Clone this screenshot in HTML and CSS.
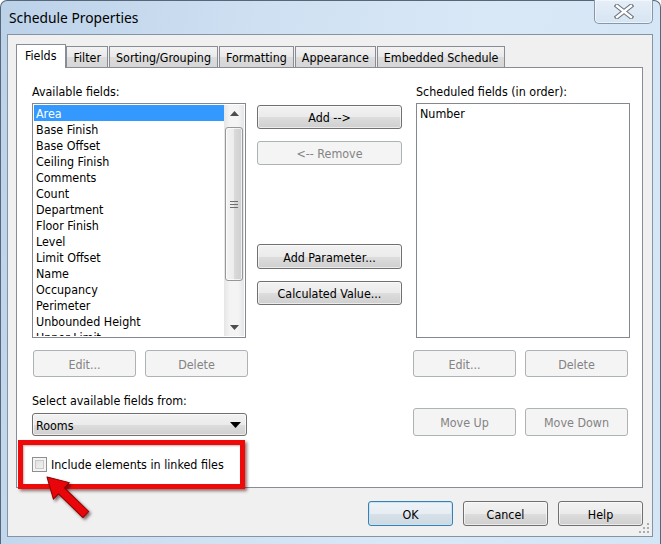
FILE: index.html
```html
<!DOCTYPE html>
<html>
<head>
<meta charset="utf-8">
<title>Schedule Properties</title>
<link rel="stylesheet" href="styles.css">
</head>
<body>
<div class="window">
  <div class="titlebar">
    <span class="title">Schedule Properties</span>
    <div class="close">
      <svg width="20" height="15" viewBox="0 0 20 15">
        <path d="M3 2 L17 13 M17 2 L3 13" stroke="#6c7480" stroke-width="4.6" stroke-linecap="square"/>
        <path d="M3 2 L17 13 M17 2 L3 13" stroke="#ffffff" stroke-width="2.4" stroke-linecap="square"/>
      </svg>
    </div>
  </div>
  <div class="client">
    <div class="tabs">
      <div class="tab active">Fields</div>
      <div class="tab">Filter</div>
      <div class="tab">Sorting/Grouping</div>
      <div class="tab">Formatting</div>
      <div class="tab">Appearance</div>
      <div class="tab">Embedded Schedule</div>
    </div>
    <div class="panel">
      <div class="cols">
        <div class="col side">
          <div class="label">Available fields:</div>
          <div class="listbox">
            <div class="items">
              <div class="item sel">Area</div>
              <div class="item">Base Finish</div>
              <div class="item">Base Offset</div>
              <div class="item">Ceiling Finish</div>
              <div class="item">Comments</div>
              <div class="item">Count</div>
              <div class="item">Department</div>
              <div class="item">Floor Finish</div>
              <div class="item">Level</div>
              <div class="item">Limit Offset</div>
              <div class="item">Name</div>
              <div class="item">Occupancy</div>
              <div class="item">Perimeter</div>
              <div class="item">Unbounded Height</div>
              <div class="item">Upper Limit</div>
            </div>
            <div class="scrollbar">
              <div class="sb-arrow">
                <svg width="9" height="5" viewBox="0 0 9 5"><path d="M0 5 L4.5 0 L9 5 Z" fill="#4d4d4d"/></svg>
              </div>
              <div class="sb-track">
                <div class="sb-thumb">
                  <svg width="8" height="7" viewBox="0 0 8 7"><path d="M0 0.5 H8 M0 3.5 H8 M0 6.5 H8" stroke="#6e6e6e" stroke-width="1"/></svg>
                </div>
              </div>
              <div class="sb-arrow">
                <svg width="9" height="5" viewBox="0 0 9 5"><path d="M0 0 L4.5 5 L9 0 Z" fill="#4d4d4d"/></svg>
              </div>
            </div>
          </div>
          <div class="btnrow">
            <button class="btn dis tall">Edit...</button>
            <button class="btn dis tall">Delete</button>
          </div>
          <div class="label from">Select available fields from:</div>
          <div class="combo">
            <span>Rooms</span>
            <svg width="11" height="6" viewBox="0 0 11 6"><path d="M0 0 L5.5 6 L11 0 Z" fill="#000"/></svg>
          </div>
          <label class="linked"><span class="checkbox"></span><span>Include elements in linked files</span></label>
        </div>
        <div class="col mid">
          <button class="btn mbtn">Add --&gt;</button>
          <button class="btn dis mbtn gap12">&lt;-- Remove</button>
          <button class="btn mbtn param">Add Parameter...</button>
          <button class="btn mbtn gap12">Calculated Value...</button>
        </div>
        <div class="col side right">
          <div class="label indent">Scheduled fields (in order):</div>
          <div class="listbox indent">
            <div class="items">
              <div class="item">Number</div>
            </div>
          </div>
          <div class="btnrow">
            <button class="btn dis tall">Edit...</button>
            <button class="btn dis tall">Delete</button>
          </div>
          <div class="btnrow move">
            <button class="btn dis tall2">Move Up</button>
            <button class="btn dis tall2">Move Down</button>
          </div>
        </div>
      </div>
      <div class="highlight"></div>
      <svg class="arrow" width="80" height="70" viewBox="0 0 80 70">
        <g transform="translate(16 12) rotate(44)">
          <polygon points="0,0 20,-11.5 20,-4.2 54,-4.2 54,4.2 20,4.2 20,11.5" fill="#e8060b" stroke="#8d0000" stroke-width="1" stroke-linejoin="round"/>
        </g>
      </svg>
    </div>
    <div class="footer">
      <button class="btn fbtn default">OK</button>
      <button class="btn fbtn">Cancel</button>
      <button class="btn fbtn">Help</button>
    </div>
    <svg class="grip" width="12" height="12" viewBox="0 0 12 12">
      <g fill="#a8aeb6">
        <rect x="9" y="1" width="2" height="2"/>
        <rect x="5" y="5" width="2" height="2"/><rect x="9" y="5" width="2" height="2"/>
        <rect x="1" y="9" width="2" height="2"/><rect x="5" y="9" width="2" height="2"/><rect x="9" y="9" width="2" height="2"/>
      </g>
    </svg>
  </div>
</div>
</body>
</html>
```

FILE: styles.css
```css
* { box-sizing: border-box; }

html, body {
  margin: 0;
  padding: 0;
  background: #ffffff;
}

body {
  width: 661px;
  height: 544px;
  overflow: hidden;
  font-family: "DejaVu Sans Condensed", "DejaVu Sans", sans-serif;
  font-stretch: condensed;
  font-size: 12.4px;
  color: #000;
}

.window {
  width: 661px;
  height: 544px;
  display: flex;
  flex-direction: column;
  border: 1px solid #56677a;
  border-bottom: none;
  border-radius: 7px 7px 0 0;
  background: linear-gradient(100deg, #bcd2e9 0%, #cfe0f2 35%, #d8e8f7 65%, #d4e5f5 100%);
  position: relative;
}

.titlebar {
  height: 33px;
  flex: none;
  display: flex;
  justify-content: space-between;
  align-items: flex-start;
  padding: 0 7px 0 8px;
}

.title {
  font-family: "Noto Sans", "Open Sans", sans-serif;
  font-stretch: normal;
  font-size: 13.8px;
  line-height: 18px;
  margin-top: 8px;
  color: #000;
}

.close {
  width: 59px;
  height: 24px;
  margin-top: -1px;
  border: 1px solid #8796aa;
  border-top: none;
  border-radius: 0 0 5px 5px;
  background: linear-gradient(#e6eff8, #d6e4f2);
  box-shadow: inset 0 0 0 1px rgba(255,255,255,0.5);
  display: flex;
  align-items: center;
  justify-content: center;
}

.client {
  flex: 1;
  margin: 0 7px 7px 6px;
  border: 1px solid #8593a3;
  background: #f0f0f0;
  display: flex;
  flex-direction: column;
  padding: 9px 9px 10px 8px;
  position: relative;
}

/* Tabs */
.tabs {
  display: flex;
  align-items: flex-end;
  height: 23px;
  flex: none;
  position: relative;
  z-index: 2;
}

.tab {
  height: 21px;
  line-height: 21px;
  padding: 0 6px;
  border: 1px solid #898c95;
  border-bottom: none;
  background: linear-gradient(#f3f3f3, #e9e9e9 50%, #dcdcdc 51%, #d6d6d6);
  margin-right: 1px;
  white-space: nowrap;
}

.tab.active {
  height: 24px;
  margin-bottom: -1px;
  background: #ffffff;
  padding: 0 9px 0 8px;
  line-height: 22px;
  margin-right: 0;
}

.panel {
  flex: 1;
  background: #ffffff;
  border: 1px solid #898c95;
  padding: 15px 12px 0 15px;
  position: relative;
}

.cols {
  display: flex;
}

.col {
  display: flex;
  flex-direction: column;
}

.side {
  width: 216px;
}

.right {
  margin-left: 11px;
}

.mid {
  width: 145px;
  margin-left: 9px;
  padding-top: 22px;
}

.label {
  line-height: 18px;
  height: 16px;
  margin-bottom: 4px;
  white-space: nowrap;
}

.indent {
  margin-left: 3px;
}

.label.from {
  margin-top: 15px;
  margin-bottom: 5px;
}

.listbox {
  width: 214px;
  height: 235px;
  border: 1px solid #828790;
  background: #fff;
  padding: 1px;
  display: flex;
  overflow: hidden;
}

.items {
  flex: 1;
  overflow: hidden;
}

.item {
  height: 16px;
  line-height: 18px;
  padding-left: 2px;
  white-space: nowrap;
}

.item.sel {
  background: #3399ff;
  color: #fff;
}

.scrollbar {
  width: 20px;
  display: flex;
  flex-direction: column;
  background: linear-gradient(90deg, #e6e6e6, #f4f4f4 30%, #f4f4f4 70%, #e6e6e6);
}

.sb-arrow {
  height: 17px;
  display: flex;
  align-items: center;
  justify-content: center;
  flex: none;
}

.sb-track {
  flex: 1;
  padding: 5px 1px 0 1px;
}

.sb-thumb {
  height: 154px;
  border: 1px solid #979797;
  border-radius: 3px;
  background: linear-gradient(90deg, #f3f3f3 0%, #ececec 50%, #dadada 51%, #cfcfcf 100%);
  box-shadow: inset 0 0 0 1px rgba(255,255,255,0.7);
  display: flex;
  align-items: center;
  justify-content: center;
}

/* Buttons */
.btn {
  font: inherit;
  font-stretch: inherit;
  color: #000;
  border: 1px solid #707070;
  border-radius: 3px;
  background: linear-gradient(#f2f2f2 0%, #ebebeb 50%, #dddddd 51%, #cfcfcf 100%);
  box-shadow: inset 0 0 0 1px rgba(255,255,255,0.6);
  padding: 1px 0 0 0;
  margin: 0;
  white-space: nowrap;
}

.btn.dis {
  color: #838383;
  border-color: #adb2b5;
  background: #f4f4f4;
  box-shadow: none;
}

.btnrow {
  display: flex;
  gap: 9px;
  margin-top: 12px;
  margin-left: 1px;
}

.right .btnrow {
  margin-left: 0;
}

.btnrow.move {
  margin-top: 31px;
}

.tall {
  width: 103px;
  height: 27px;
}

.tall2 {
  width: 103px;
  height: 28px;
}

.mbtn {
  width: 145px;
  height: 24px;
}

.mbtn.gap12 {
  margin-top: 12px;
}

.mbtn.param {
  margin-top: 79px;
  height: 25px;
}

.combo {
  width: 215px;
  height: 23px;
  border: 1px solid #707070;
  border-radius: 3px;
  background: linear-gradient(#f2f2f2 0%, #ebebeb 50%, #dddddd 51%, #cfcfcf 100%);
  box-shadow: inset 0 0 0 1px rgba(255,255,255,0.6);
  display: flex;
  align-items: center;
  justify-content: space-between;
  padding: 1px 5px 0 3px;
}

.linked {
  display: flex;
  align-items: center;
  margin-top: 21px;
  height: 16px;
  line-height: 18px;
  position: relative;
  z-index: 2;
}

.checkbox {
  width: 15px;
  height: 15px;
  border: 1px solid #8e8f8f;
  background: linear-gradient(135deg, #dcdcdc, #f6f6f6);
  box-shadow: inset 0 0 0 2px #f4f4f4, inset 0 0 0 3px #c9c9c9;
  margin-right: 4px;
  margin-top: -1px;
  flex: none;
}

/* annotation overlay */
.highlight {
  position: absolute;
  left: 1px;
  top: 372px;
  width: 227px;
  height: 49px;
  border: 5px solid #ef0a0a;
  box-shadow: 2px 2px 3px rgba(60, 0, 0, 0.55), inset 1px 1px 2px rgba(80,0,0,0.3);
  z-index: 1;
}

.arrow {
  position: absolute;
  left: 14px;
  top: 397px;
  z-index: 3;
  filter: drop-shadow(2px 2px 1.5px rgba(40, 0, 0, 0.55));
}

.footer {
  display: flex;
  justify-content: flex-end;
  gap: 10px;
  margin-top: 13px;
  flex: none;
}

.fbtn {
  width: 85px;
  height: 25px;
}

.fbtn.default {
  border-color: #3c7fb1;
  background: linear-gradient(#eef3f7 0%, #e6edf3 50%, #d8e1e9 51%, #cdd8e1 100%);
  box-shadow: inset 0 0 0 1px #c7e3f6;
}

.grip {
  position: absolute;
  right: 2px;
  bottom: 2px;
}
```
